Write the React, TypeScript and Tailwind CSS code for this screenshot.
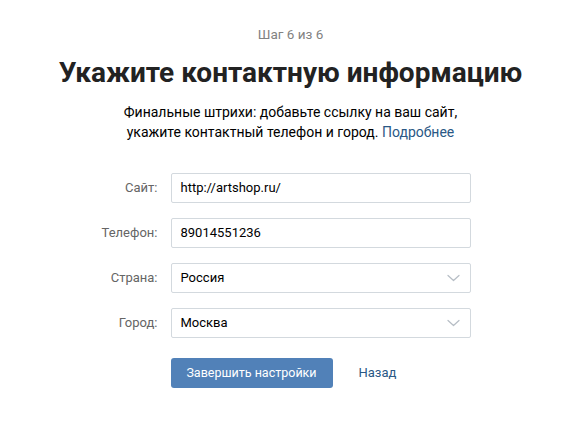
const rows = [
  { label: 'Сайт:', value: 'http://artshop.ru/', select: false },
  { label: 'Телефон:', value: '89014551236', select: false },
  { label: 'Страна:', value: 'Россия', select: true },
  { label: 'Город:', value: 'Москва', select: true },
];

function Chevron() {
  return (
    <svg
      className="absolute right-[10px] top-1/2 -translate-y-1/2"
      width="13"
      height="8"
      viewBox="0 0 13 8"
      fill="none"
    >
      <path d="M1 1.5 L6.5 6.5 L12 1.5" stroke="#b6bdc5" strokeWidth="1.2" strokeLinecap="round" strokeLinejoin="round" />
    </svg>
  );
}

export default function App() {
  return (
    <div className="min-h-screen bg-white font-['Roboto',sans-serif] flex flex-col items-center pt-[25px]">
      <p className="text-[13.5px] leading-[18px] text-[#828282]">Шаг 6 из 6</p>

      <h1 className="mt-[13px] text-[28px] leading-[34px] font-bold text-[#222222]">
        Укажите контактную информацию
      </h1>

      <p className="mt-[12px] text-[14px] leading-[20px] text-black text-center">
        Финальные штрихи: добавьте ссылку на ваш сайт,
        <br />
        укажите контактный телефон и город. <span className="text-[#2a5885]">Подробнее</span>
      </p>

      {/* Form */}
      <div className="mt-[31px] flex flex-col gap-[15px] w-[400px]">
        {rows.map((r) => (
          <div key={r.label} className="flex items-center">
            <label className="w-[80px] pr-[13px] text-right text-[13px] text-[#656565]">{r.label}</label>
            <div className="relative w-[300px] h-[30px] border border-[#d3d9de] rounded-[2px] flex items-center px-[9px] text-[13px] text-black">
              {r.value}
              {r.select && <Chevron />}
            </div>
          </div>
        ))}

        <div className="flex items-center mt-[5px] pl-[80px]">
          <button className="h-[30px] w-[162px] rounded-[3px] bg-[#5181b8] text-white text-[12.5px]">
            Завершить настройки
          </button>
          <a className="ml-[26px] text-[13px] text-[#2a5885]">Назад</a>
        </div>
      </div>
    </div>
  );
}
